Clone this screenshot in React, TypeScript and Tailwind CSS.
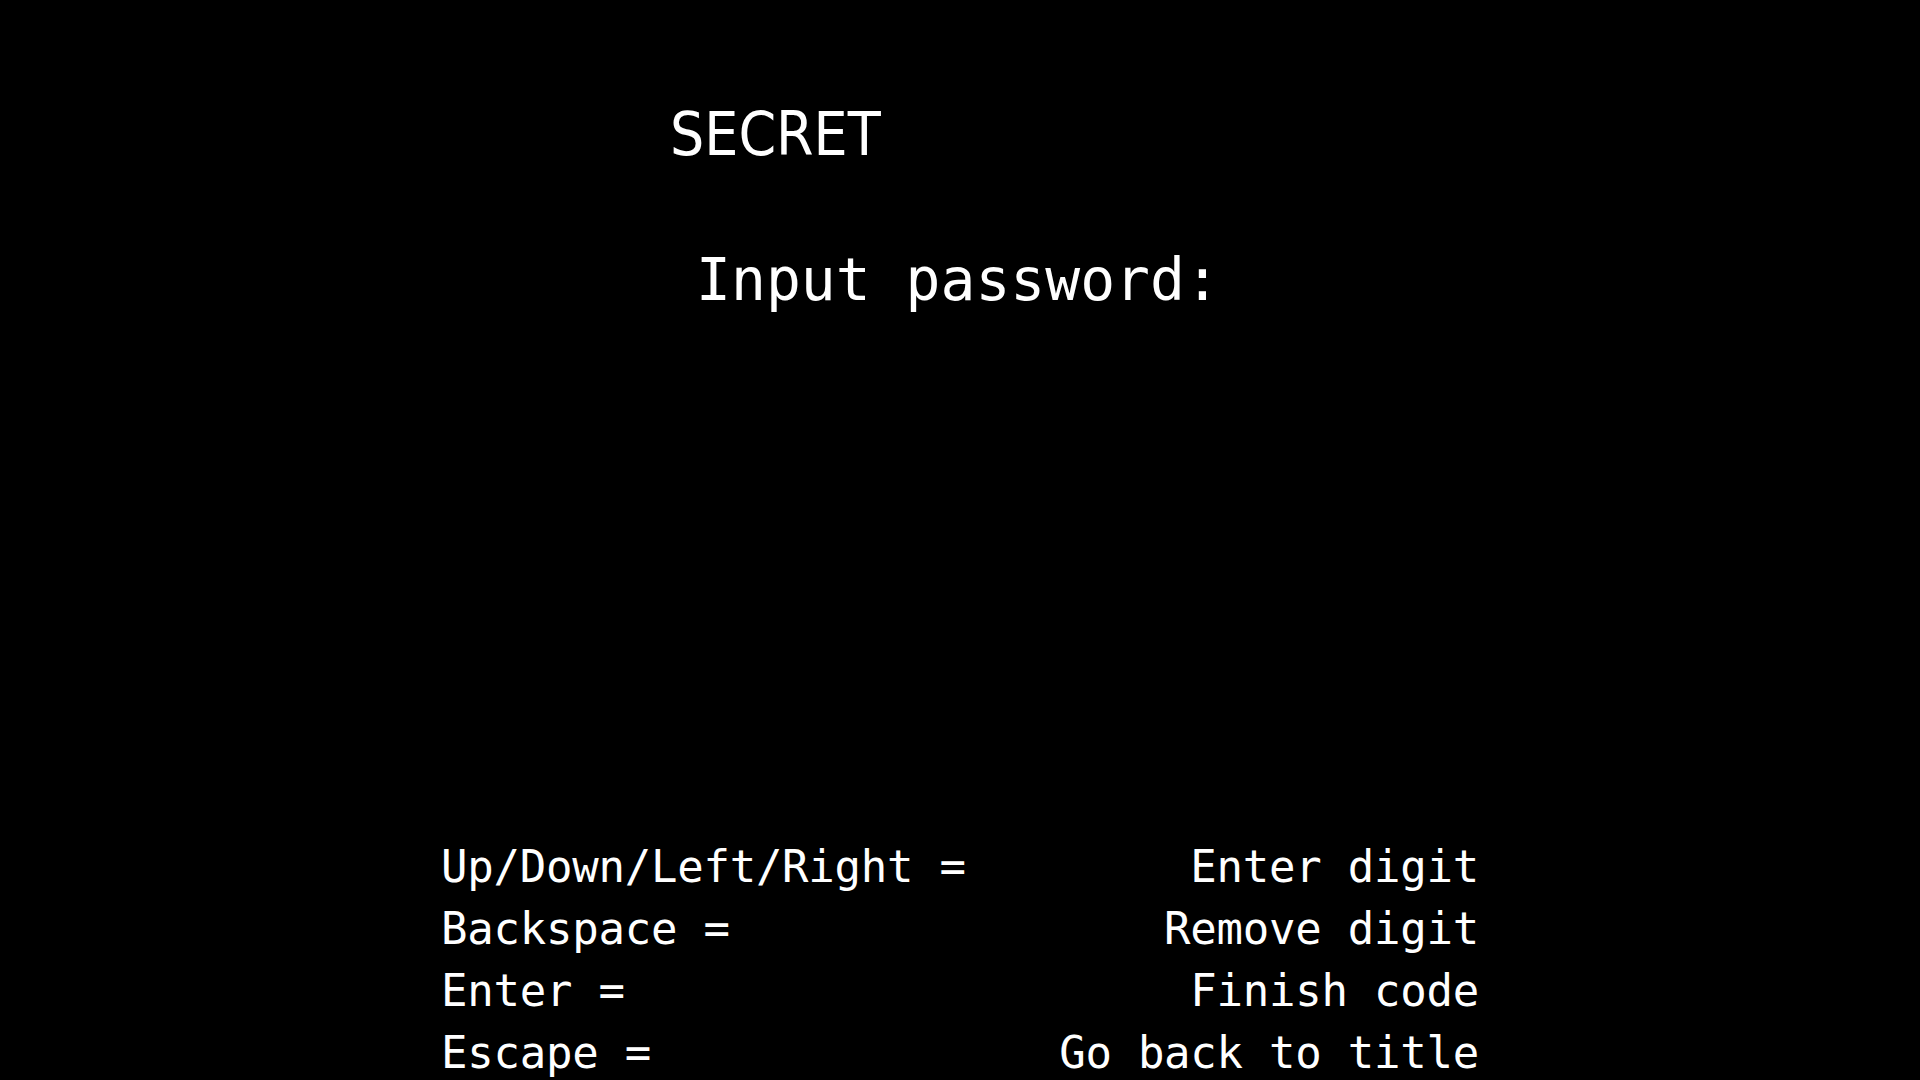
import React from 'react';

const controls = [
  { key: 'Up/Down/Left/Right =', action: 'Enter digit' },
  { key: 'Backspace =', action: 'Remove digit' },
  { key: 'Enter =', action: 'Finish code' },
  { key: 'Escape =', action: 'Go back to title' },
];

export default function App() {
  return (
    <div className="w-full h-screen overflow-hidden bg-black text-white">
      <div className="pt-[104px] pl-[670px]">
        <h1
          className="text-[60px] leading-[60px] font-normal font-stretch-condensed"
          style={{ fontFamily: '"DejaVu Sans Condensed", "DejaVu Sans", sans-serif' }}
        >
          SECRET
        </h1>
      </div>

      <div
        className="mt-[87px] text-center text-[58px] leading-[59px] pr-[4px]"
        style={{ fontFamily: '"DejaVu Sans Mono", monospace' }}
      >
        Input password:
      </div>

      <div
        className="mt-[526px] mx-auto w-[1038px] flex flex-col text-[44px] leading-[62px] tracking-[-0.25px]"
        style={{ fontFamily: '"DejaVu Sans Mono", monospace' }}
      >
        {controls.map((c) => (
          <div key={c.key} className="flex justify-between whitespace-pre">
            <span>{c.key}</span>
            <span>{c.action}</span>
          </div>
        ))}
      </div>
    </div>
  );
}
